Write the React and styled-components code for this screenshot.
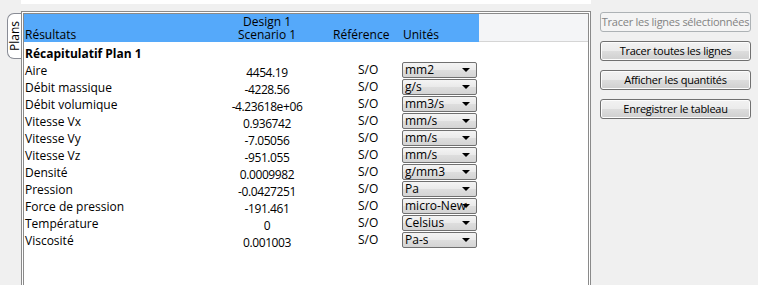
import React from "react";
import styled, { createGlobalStyle } from "styled-components";

const GlobalStyle = createGlobalStyle`
  html, body {
    margin: 0;
    padding: 0;
    background: #f0f0f0;
  }
  body {
    font-family: "Open Sans", "Liberation Sans", sans-serif;
    font-size: 12px;
    color: #000;
  }
`;

const Page = styled.div`
  display: flex;
  width: 758px;
  height: 285px;
  overflow: hidden;
  background: #f0f0f0;
`;

const Sidebar = styled.div`
  width: 21px;
  flex: none;
  padding-top: 13px;
  box-sizing: border-box;
  display: flex;
  justify-content: flex-end;
`;

const Tab = styled.div`
  width: 14px;
  height: 46px;
  box-sizing: border-box;
  background: #fff;
  border: 1px solid #898c95;
  border-right: none;
  border-radius: 7px 0 0 7px;
  display: flex;
  align-items: center;
  justify-content: center;
`;

const TabLabel = styled.span`
  writing-mode: vertical-rl;
  transform: rotate(180deg);
  font-size: 12px;
  line-height: 13px;
`;

const Main = styled.div`
  width: 570px;
  flex: none;
  display: flex;
  flex-direction: column;
`;

const TopStrip = styled.div`
  height: 4px;
  margin-bottom: 7px;
  background: #fff;
`;

const Frame = styled.div`
  flex: 1;
  border: 3px double #8a8a8a;
  border-bottom: none;
  background: #fff;
  display: flex;
  flex-direction: column;
`;

const HeaderRow = styled.div`
  display: flex;
  height: 28px;
`;

const columns = "180px 126px 72px 77px";

const HeaderBand = styled.div`
  display: grid;
  grid-template-columns: ${columns};
  background: #55a9fa;
  align-items: end;
  padding-bottom: 1px;
  box-sizing: border-box;
`;

const HeaderFiller = styled.div`
  flex: 1;
  background: #f4f5f7;
  border-bottom: 1px solid #d5d5d5;
  height: 27px;
`;

const HeaderCell = styled.div`
  line-height: 13px;
  text-align: ${p => p.$align || "left"};
  padding-left: ${p => p.$pad || 0}px;
  white-space: nowrap;
`;

const Body = styled.div`
  padding-top: 3px;
  display: flex;
  flex-direction: column;
`;

const Row = styled.div`
  display: grid;
  grid-template-columns: ${columns};
  height: 17px;
  align-items: start;
`;

const Label = styled.div`
  padding-left: 1px;
  line-height: 17px;
  font-weight: ${p => (p.$bold ? 700 : 400)};
  white-space: nowrap;
`;

const Value = styled.div`
  text-align: center;
  line-height: 17px;
  padding-top: 2px;
  letter-spacing: -0.4px;
`;

const Ref = styled.div`
  padding-left: 28px;
  line-height: 16px;
`;

const Select = styled.div`
  position: relative;
  width: 75px;
  height: 16px;
  box-sizing: border-box;
  border: 1px solid #707070;
  border-radius: 2px;
  background: linear-gradient(#f4f4f4, #eaeaea 50%, #dedede 51%, #d4d4d4);
  padding-left: 2px;
  display: flex;
  align-items: center;

  &::after {
    content: "";
    position: absolute;
    right: 6px;
    top: 5px;
    border-left: 4px solid transparent;
    border-right: 4px solid transparent;
    border-top: 4px solid #000;
  }
`;

const SelectText = styled.span`
  max-width: 62px;
  line-height: 16px;
  overflow: hidden;
  white-space: nowrap;
`;

const ButtonPanel = styled.div`
  flex: 1;
  display: flex;
  flex-direction: column;
  gap: 9px;
  padding: 12px 7px 0 9px;
`;

const Button = styled.button`
  height: 20px;
  width: 151px;
  padding: 0;
  font-family: "Open Sans", "Liberation Sans", sans-serif;
  font-size: 11px;
  letter-spacing: -0.25px;
  line-height: 18px;
  white-space: nowrap;
  border-radius: 3px;
  border: 1px solid ${p => (p.disabled ? "#adb2b5" : "#707070")};
  color: ${p => (p.disabled ? "#838383" : "#000")};
  background: ${p =>
    p.disabled
      ? "#f4f4f4"
      : "linear-gradient(#f2f2f2, #ebebeb 50%, #dddddd 51%, #cfcfcf)"};
  box-shadow: ${p => (p.disabled ? "none" : "inset 0 0 0 1px #fcfcfc")};
`;

const rows = [
  ["Aire", "4454.19", "mm2"],
  ["Débit massique", "-4228.56", "g/s"],
  ["Débit volumique", "-4.23618e+06", "mm3/s"],
  ["Vitesse Vx", "0.936742", "mm/s"],
  ["Vitesse Vy", "-7.05056", "mm/s"],
  ["Vitesse Vz", "-951.055", "mm/s"],
  ["Densité", "0.0009982", "g/mm3"],
  ["Pression", "-0.0427251", "Pa"],
  ["Force de pression", "-191.461", "micro-Newton"],
  ["Température", "0", "Celsius"],
  ["Viscosité", "0.001003", "Pa-s"]
];

const buttons = [
  { label: "Tracer les lignes sélectionnées", disabled: true },
  { label: "Tracer toutes les lignes" },
  { label: "Afficher les quantités" },
  { label: "Enregistrer le tableau" }
];

const App = () => {
  return (
    <Page>
      <GlobalStyle />
      <Sidebar>
        <Tab>
          <TabLabel>Plans</TabLabel>
        </Tab>
      </Sidebar>
      <Main>
        <TopStrip />
        <Frame>
          <HeaderRow>
            <HeaderBand>
              <HeaderCell $pad={1}>Résultats</HeaderCell>
              <HeaderCell $align="center">
                Design 1<br />
                Scenario 1
              </HeaderCell>
              <HeaderCell $pad={3}>Référence</HeaderCell>
              <HeaderCell $pad={1}>Unités</HeaderCell>
            </HeaderBand>
            <HeaderFiller />
          </HeaderRow>
          <Body>
            <Row>
              <Label $bold>Récapitulatif Plan 1</Label>
            </Row>
            {rows.map(([label, value, unit], idx) => (
              <Row key={`row-${idx}`}>
                <Label>{label}</Label>
                <Value>{value}</Value>
                <Ref>S/O</Ref>
                <Select>
                  <SelectText>{unit}</SelectText>
                </Select>
              </Row>
            ))}
          </Body>
        </Frame>
      </Main>
      <ButtonPanel>
        {buttons.map((b, idx) => (
          <Button key={`btn-${idx}`} disabled={b.disabled}>
            {b.label}
          </Button>
        ))}
      </ButtonPanel>
    </Page>
  );
};

export default App;
